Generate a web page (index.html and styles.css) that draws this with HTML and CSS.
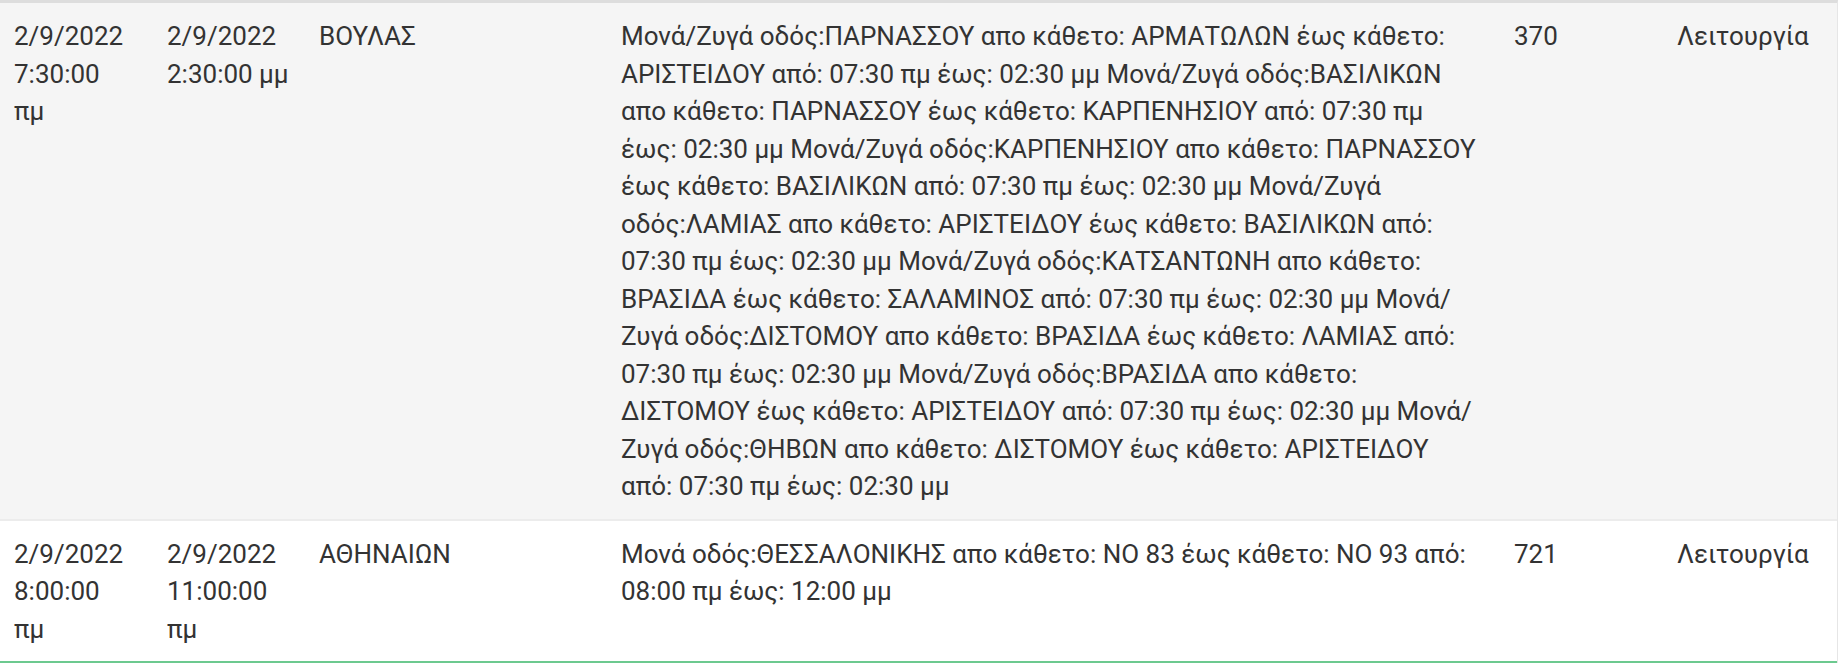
FILE: index.html
```html
<!DOCTYPE html>
<html lang="el">
<head>
<meta charset="utf-8">
<title>Διακοπές</title>
<link rel="stylesheet" href="styles.css">
</head>
<body>
<div class="table-wrap">
  <table class="data">
    <colgroup>
      <col class="w1"><col class="w2"><col class="w3"><col class="w4"><col class="w5"><col class="w6">
    </colgroup>
    <tbody>
      <tr class="row odd">
        <td class="c1">2/9/2022 7:30:00 πμ</td>
        <td>2/9/2022 2:30:00 μμ</td>
        <td>ΒΟΥΛΑΣ</td>
        <td>Μονά/Ζυγά οδός:ΠΑΡΝΑΣΣΟΥ απο κάθετο: ΑΡΜΑΤΩΛΩΝ έως κάθετο: ΑΡΙΣΤΕΙΔΟΥ από: 07:30 πμ έως: 02:30 μμ Μονά/Ζυγά οδός:ΒΑΣΙΛΙΚΩΝ απο κάθετο: ΠΑΡΝΑΣΣΟΥ έως κάθετο: ΚΑΡΠΕΝΗΣΙΟΥ από: 07:30 πμ έως: 02:30 μμ Μονά/Ζυγά οδός:ΚΑΡΠΕΝΗΣΙΟΥ απο κάθετο: ΠΑΡΝΑΣΣΟΥ έως κάθετο: ΒΑΣΙΛΙΚΩΝ από: 07:30 πμ έως: 02:30 μμ Μονά/Ζυγά οδός:ΛΑΜΙΑΣ απο κάθετο: ΑΡΙΣΤΕΙΔΟΥ έως κάθετο: ΒΑΣΙΛΙΚΩΝ από: 07:30 πμ έως: 02:30 μμ Μονά/Ζυγά οδός:ΚΑΤΣΑΝΤΩΝΗ απο κάθετο: ΒΡΑΣΙΔΑ έως κάθετο: ΣΑΛΑΜΙΝΟΣ από: 07:30 πμ έως: 02:30 μμ Μονά/Ζυγά οδός:ΔΙΣΤΟΜΟΥ απο κάθετο: ΒΡΑΣΙΔΑ έως κάθετο: ΛΑΜΙΑΣ από: 07:30 πμ έως: 02:30 μμ Μονά/Ζυγά οδός:ΒΡΑΣΙΔΑ απο κάθετο: ΔΙΣΤΟΜΟΥ έως κάθετο: ΑΡΙΣΤΕΙΔΟΥ από: 07:30 πμ έως: 02:30 μμ Μονά/Ζυγά οδός:ΘΗΒΩΝ απο κάθετο: ΔΙΣΤΟΜΟΥ έως κάθετο: ΑΡΙΣΤΕΙΔΟΥ από: 07:30 πμ έως: 02:30 μμ</td>
        <td>370</td>
        <td>Λειτουργία</td>
      </tr>
      <tr class="row even">
        <td class="c1">2/9/2022 8:00:00 πμ</td>
        <td>2/9/2022 11:00:00 πμ</td>
        <td>ΑΘΗΝΑΙΩΝ</td>
        <td>Μονά οδός:ΘΕΣΣΑΛΟΝΙΚΗΣ απο κάθετο: ΝΟ 83 έως κάθετο: ΝΟ 93 από: 08:00 πμ έως: 12:00 μμ</td>
        <td>721</td>
        <td>Λειτουργία</td>
      </tr>
    </tbody>
  </table>
</div>
</body>
</html>
```

FILE: styles.css
```css
html, body {
  margin: 0;
  padding: 0;
  background: #ffffff;
}

body {
  font-family: Roboto, "Noto Sans", "DejaVu Sans", sans-serif;
  font-size: 26px;
  line-height: 37.5px;
  color: #333333;
}

.table-wrap {
  width: 1837px;
  border-top: 3px solid #dddddd;
  border-right: 1px solid #e6e6e6;
}

.data {
  width: 100%;
  border-collapse: collapse;
  table-layout: fixed;
}

.w1 { width: 153px; }
.w2 { width: 152px; }
.w3 { width: 302px; }
.w4 { width: 893px; }
.w5 { width: 163px; }
.w6 { width: 174px; }

.data td {
  vertical-align: top;
  padding: 15px 16px 13px 14px;
  text-align: left;
}

.data td.c1 {
  padding-right: 24px;
}

.row.odd {
  background: #f5f5f5;
  border-bottom: 2px solid #ececec;
}

.row.even {
  background: #ffffff;
  border-bottom: 2px solid #6cc98f;
}
```
